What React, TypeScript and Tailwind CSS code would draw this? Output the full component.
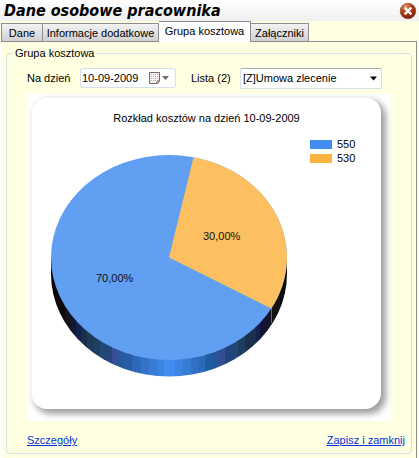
import React from "react";

const FONT = "font-['Liberation_Sans',Arial,sans-serif]";

// Vertical bands of the pie's rim, from the left edge to the right one.
const RIM: { x: number; color: string }[] = [
  { x: 0, color: "#0a0708" },
  { x: 6, color: "#0c0b0e" },
  { x: 14, color: "#12131c" },
  { x: 20, color: "#131830" },
  { x: 25, color: "#14204e" },
  { x: 30, color: "#18304a" },
  { x: 36, color: "#1b3a58" },
  { x: 43, color: "#1f4062" },
  { x: 49, color: "#204a75" },
  { x: 55, color: "#23477c" },
  { x: 61, color: "#354d94" },
  { x: 66, color: "#27589a" },
  { x: 73, color: "#265da4" },
  { x: 81, color: "#2c69bb" },
  { x: 90, color: "#3272c8" },
  { x: 98, color: "#377bd4" },
  { x: 106, color: "#3d83e0" },
  { x: 113, color: "#428df0" },
  { x: 124, color: "#3d83e0" },
  { x: 132, color: "#387bd3" },
  { x: 140, color: "#3070c4" },
  { x: 148, color: "#2b69b9" },
  { x: 154, color: "#205ca2" },
  { x: 162, color: "#27549a" },
  { x: 169, color: "#344d90" },
  { x: 174, color: "#22457d" },
  { x: 181, color: "#204774" },
  { x: 187, color: "#1c3c60" },
  { x: 194, color: "#1a304d" },
  { x: 205, color: "#141f52" },
  { x: 209, color: "#101538" },
  { x: 214, color: "#12162a" },
  { x: 220, color: "#15110f" },
  { x: 229, color: "#0b0a0b" },
  { x: 236, color: "#0b0a0b" },
];

function CloseIcon() {
  return (
    <svg width="18" height="18" viewBox="0 0 18 18" aria-hidden="true">
      <defs>
        <radialGradient id="ball" cx="0.35" cy="0.2" r="0.8">
          <stop offset="0" stopColor="#dd9a70" />
          <stop offset="0.45" stopColor="#b5421a" />
          <stop offset="1" stopColor="#7c1f04" />
        </radialGradient>
      </defs>
      <circle cx="9" cy="9" r="7.8" fill="url(#ball)" stroke="#8a3a20" strokeWidth="0.6" />
      <path d="M6.500 6.500l5 5M11.500 6.500l-5 5" stroke="#fff" strokeWidth="2.4" strokeLinecap="square" />
    </svg>
  );
}

function CalendarIcon() {
  return (
    <svg width="22" height="14" viewBox="0 0 22 14" aria-hidden="true">
      <path d="M1.5 1.5h10v9l-2 2h-8z" fill="#f6f2f2" stroke="#7b6370" />
      <path
        d="M3 3.500h7M3 5.500h7M3 7.500h7M3 9.500h5"
        stroke="#b5adb2"
        strokeDasharray="1 1"
      />
      <path d="M9 12v-2h2" fill="none" stroke="#7b6370" />
      <path d="M14 5h7l-3.500 4z" fill="#6f6b78" />
    </svg>
  );
}

function Pie() {
  return (
    <svg
      width="238"
      height="224"
      viewBox="0 0 238 224"
      className={`block text-[11px] ${FONT}`}
      role="img"
      aria-label="550: 70,00%, 530: 30,00%"
    >
      <defs>
        <linearGradient id="rim" gradientUnits="userSpaceOnUse" x1="1" x2="237" y1="0" y2="0">
          {RIM.slice(0, -1).flatMap((b, i) => [
            <stop key={`${i}a`} offset={b.x / 236} stopColor={b.color} />,
            <stop key={`${i}b`} offset={RIM[i + 1].x / 236} stopColor={b.color} />,
          ])}
        </linearGradient>
      </defs>
      <path d="M1 104v16a118 102.500 0 0 0 236 0v-16z" fill="url(#rim)" />
      <path d="M221.500 154v15" stroke="#8a5f30" />
      <ellipse cx="119" cy="103.500" rx="118" ry="102.500" fill="#619ff3" />
      <path d="M119 103.500L143.500 3.200A118 102.500 0 0 1 221.300 154.500Z" fill="#fcc060" />
      <text x="46" y="128" fill="#111">70,00%</text>
      <text x="153" y="86" fill="#111">30,00%</text>
    </svg>
  );
}

const TABS = [
  { label: "Dane", width: "w-[42px]" },
  { label: "Informacje dodatkowe", width: "w-[116px]" },
  { label: "Grupa kosztowa", width: "w-[92px]" },
  { label: "Załączniki", width: "w-[58px]" },
];

const LEGEND = [
  { label: "550", swatch: "bg-[#418cf0]" },
  { label: "530", swatch: "bg-[#fcb441]" },
];

export default function App() {
  const [tab, setTab] = React.useState(2);
  const [date, setDate] = React.useState("10-09-2009");

  return (
    <div className={`min-h-screen bg-[#ffffe1] text-[11px] leading-[14px] text-black ${FONT}`}>
      <header className="flex h-[21px] items-center justify-between bg-linear-to-b from-white to-[#efefef] pr-0.5 pl-1">
        <h1 className="font-['DejaVu_Sans_Condensed','DejaVu_Sans',sans-serif] text-[16px] leading-[21px] font-bold whitespace-nowrap italic">
          Dane osobowe pracownika
        </h1>
        <button type="button" aria-label="Zamknij">
          <CloseIcon />
        </button>
      </header>

      <div role="tablist" className="flex h-[21px] items-end pl-px">
        {TABS.map((t, i) => (
          <button
            key={t.label}
            type="button"
            role="tab"
            aria-selected={tab === i}
            onClick={() => setTab(i)}
            className={`${t.width} shrink-0 border border-[#8c8e94] whitespace-nowrap ${
              i > 0 ? "border-l-0" : ""
            } ${
              tab === i
                ? "h-[21px] border-b-0 bg-white pb-0.5"
                : "h-[19px] bg-linear-to-b from-[#f3f3f3] to-[#d0d0d0]"
            }`}
          >
            {t.label}
          </button>
        ))}
        <div className="mr-0.5 h-px grow bg-[#8c8e94]" />
      </div>

      <main className="mr-0.5 border-r border-l-2 border-r-[#8c8e94] border-l-white px-1 py-1">
        <fieldset className="rounded-[4px] border border-[#d5dfe9] px-5 pb-1.5">
          <legend className="-ml-3.5 px-0.5">Grupa kosztowa</legend>

          <div className="mt-2 flex h-5 items-center whitespace-nowrap">
            <label htmlFor="day" className="w-[53px]">
              Na dzień
            </label>
            <div className="flex h-5 w-[96px] items-center rounded-[2px] border border-[#d5dfe9] bg-white">
              <input
                id="day"
                value={date}
                onChange={(e) => setDate(e.target.value)}
                className="w-[67px] pl-px outline-none"
              />
              <button type="button" aria-label="Kalendarz">
                <CalendarIcon />
              </button>
            </div>
            <label htmlFor="list" className="ml-[15px] w-[49px]">
              Lista (2)
            </label>
            <div className="relative">
              <select
                id="list"
                className="block h-[21px] w-[142px] appearance-none rounded-[2px] border border-[#d5dfe9] border-t-[#abadb3] bg-white pl-0.5 outline-none"
              >
                <option>[Z]Umowa zlecenie</option>
              </select>
              <svg
                className="pointer-events-none absolute top-2 right-1"
                width="9"
                height="5"
                viewBox="0 0 9 5"
                aria-hidden="true"
              >
                <path d="M1 0.500h7l-3.500 4z" fill="#000" />
              </svg>
            </div>
          </div>

          <div className="mt-1.5 bg-white pt-[3px] pr-2.5 pb-3 pl-1">
            <section className="h-[312px] rounded-[16px] border-t border-l border-[#f4f4f4] bg-white pt-[13px] shadow-[4px_4px_6px_1px_#a0a0a0]">
              <h2 className="text-center">Rozkład kosztów na dzień 10-09-2009</h2>
              <ul className="mt-3 ml-auto w-[71px]">
                {LEGEND.map((l) => (
                  <li key={l.label} className="flex h-3.5 items-center gap-[5px]">
                    <span className={`h-[9px] w-[22px] ${l.swatch}`} />
                    {l.label}
                  </li>
                ))}
              </ul>
              <div className="-mt-[11px] pl-[18px]">
                <Pie />
              </div>
            </section>
          </div>

          <nav className="mt-3 -mr-3.5 flex justify-between text-[#0033dd] underline">
            <a href="#szczegoly">Szczegóły</a>
            <a href="#zapisz">Zapisz i zamknij</a>
          </nav>
        </fieldset>
      </main>
    </div>
  );
}
